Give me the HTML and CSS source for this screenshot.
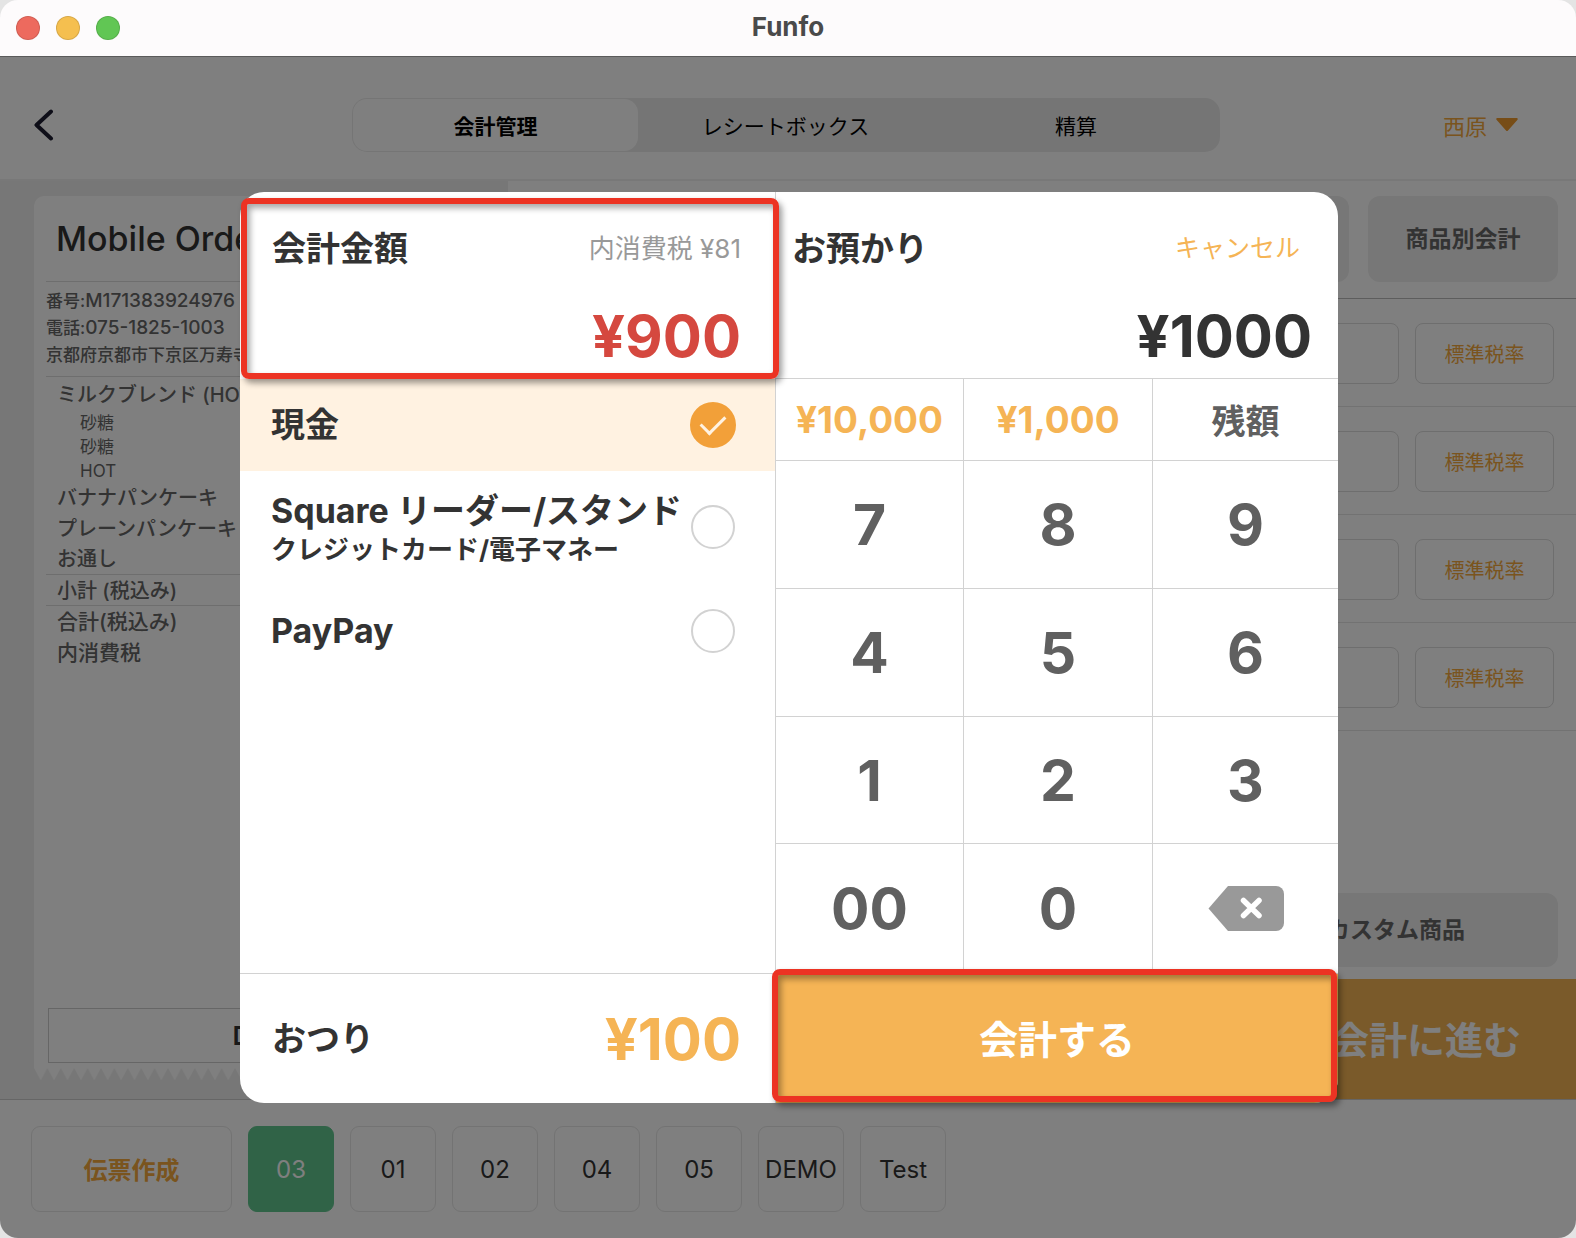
FILE: index.html
```html
<!DOCTYPE html>
<html lang="ja">
<head>
<meta charset="utf-8">
<meta name="viewport" content="width=device-width, initial-scale=1">
<title>Funfo</title>
<link rel="stylesheet" href="styles.css">
</head>
<body>
<div class="window">
  <div class="titlebar">
    <div class="lights">
      <span class="light light-close"></span>
      <span class="light light-min"></span>
      <span class="light light-max"></span>
    </div>
    <h1 class="window-title">Funfo</h1>
  </div>

  <div class="app">
    <header class="topbar">
      <button class="back" type="button" aria-label="戻る">
        <svg width="20" height="32" viewBox="0 0 20 32" fill="none" stroke="#1c1c30" stroke-width="4" stroke-linecap="round" stroke-linejoin="round"><path d="M17 2.500 2.500 16 17 29.500"/></svg>
      </button>
      <nav class="tabs">
        <button class="tab tab-active" type="button">会計管理</button>
        <button class="tab" type="button">レシートボックス</button>
        <button class="tab" type="button">精算</button>
      </nav>
      <button class="user" type="button">西原
        <svg width="22" height="14" viewBox="0 0 22 14"><path d="M1.500 0h19c1.200 0 1.700 1.200.8 2L12 12.500c-.6.700-1.400.7-2 0L.7 2C-.2 1.200.3 0 1.500 0z" fill="#ef9a2e"/></svg>
      </button>
    </header>

    <main class="content">
      <section class="receipt-pane">
        <div class="receipt">
          <h2 class="shop">Mobile Order</h2>
          <div class="shop-info">
            <p>番号:<span class="code">M171383924976</span></p>
            <p>電話:<span class="code">075-1825-1003</span></p>
            <p>京都府京都市下京区万寿寺町</p>
          </div>
          <ul class="items">
            <li>ミルクブレンド (HOT)
              <ul class="options">
                <li>砂糖</li>
                <li>砂糖</li>
                <li>HOT</li>
              </ul>
            </li>
            <li>バナナパンケーキ</li>
            <li>プレーンパンケーキ</li>
            <li>お通し</li>
          </ul>
          <p class="subtotal">小計 (税込み)</p>
          <p class="sum">合計(税込み)</p>
          <p class="sum">内消費税</p>
          <button class="receipt-button" type="button">DM</button>
        </div>
        <svg class="zigzag" width="100%" height="13" aria-hidden="true">
          <defs><pattern id="teeth" width="13.400" height="13" patternUnits="userSpaceOnUse"><path d="M0 0h13.400L6.700 12.500z" fill="#fff"/></pattern></defs>
          <rect width="100%" height="13" fill="url(#teeth)"/>
        </svg>
      </section>

      <section class="order-pane">
        <div class="actions">
          <button class="soft-button" type="button" aria-label="割引"></button>
          <button class="soft-button" type="button">商品別会計</button>
        </div>
        <ul class="lines">
          <li><input class="qty" type="text" aria-label="数量"><button class="tax" type="button">標準税率</button></li>
          <li><input class="qty" type="text" aria-label="数量"><button class="tax" type="button">標準税率</button></li>
          <li><input class="qty" type="text" aria-label="数量"><button class="tax" type="button">標準税率</button></li>
          <li><input class="qty" type="text" aria-label="数量"><button class="tax" type="button">標準税率</button></li>
        </ul>
        <button class="soft-button custom" type="button">カスタム商品</button>
        <button class="proceed" type="button">会計に進む</button>
      </section>
    </main>

    <footer class="slips">
      <button class="slip slip-new" type="button">伝票作成</button>
      <button class="slip slip-active" type="button">03</button>
      <button class="slip" type="button">01</button>
      <button class="slip" type="button">02</button>
      <button class="slip" type="button">04</button>
      <button class="slip" type="button">05</button>
      <button class="slip" type="button">DEMO</button>
      <button class="slip" type="button">Test</button>
    </footer>

    <div class="overlay">
      <div class="dialog" role="dialog" aria-label="会計">
        <section class="pay-side">
          <div class="due marked">
            <div class="head-row">
              <h2 class="heading">会計金額</h2>
              <span class="tax-note">内消費税 ¥81</span>
            </div>
            <p class="amount amount-due">¥900</p>
          </div>
          <div class="methods">
            <label class="method method-on">
              <span class="method-name">現金</span>
              <input type="radio" name="method" checked>
            </label>
            <label class="method method-tall">
              <span class="method-name">Square リーダー/スタンド<small>クレジットカード/電子マネー</small></span>
              <input type="radio" name="method">
            </label>
            <label class="method">
              <span class="method-name">PayPay</span>
              <input type="radio" name="method">
            </label>
          </div>
          <div class="change">
            <span class="heading">おつり</span>
            <span class="amount amount-change">¥100</span>
          </div>
        </section>

        <section class="key-side">
          <div class="received">
            <div class="head-row">
              <h2 class="heading">お預かり</h2>
              <button class="cancel" type="button">キャンセル</button>
            </div>
            <p class="amount">¥1000</p>
          </div>
          <div class="keypad">
            <button class="key quick" type="button">¥10,000</button>
            <button class="key quick" type="button">¥1,000</button>
            <button class="key rest" type="button">残額</button>
            <button class="key" type="button">7</button>
            <button class="key" type="button">8</button>
            <button class="key" type="button">9</button>
            <button class="key" type="button">4</button>
            <button class="key" type="button">5</button>
            <button class="key" type="button">6</button>
            <button class="key" type="button">1</button>
            <button class="key" type="button">2</button>
            <button class="key" type="button">3</button>
            <button class="key" type="button">00</button>
            <button class="key" type="button">0</button>
            <button class="key" type="button" aria-label="削除">
              <svg width="76" height="45" viewBox="0 0 76 45"><path d="M20 0H68a8 8 0 0 1 8 8V37a8 8 0 0 1-8 8H20L0.500 22.500z" fill="#999"/><path d="M35.500 14.500 51 29.500M51 14.500 35.500 29.500" stroke="#fff" stroke-width="5.500" stroke-linecap="round"/></svg>
            </button>
          </div>
          <div class="pay-box marked">
            <button class="pay" type="button">会計する</button>
          </div>
        </section>
      </div>
    </div>
  </div>
</div>
</body>
</html>
```

FILE: styles.css
```css
* {
  box-sizing: border-box;
}

body {
  margin: 0;
  background: #e4e4e4;
  font-family: Inter, "Noto Sans CJK JP", sans-serif;
  color: #333;
}

h1, h2, p, ul {
  margin: 0;
  padding: 0;
  list-style: none;
}

button {
  margin: 0;
  padding: 0;
  border: 0;
  background: none;
  color: inherit;
  font: inherit;
  white-space: nowrap;
}

/* Window frame */
.window {
  display: flex;
  flex-direction: column;
  min-height: 100vh;
  border-radius: 18px;
  overflow: hidden;
}

.titlebar {
  display: grid;
  grid-template-columns: 1fr auto 1fr;
  align-items: center;
  height: 57px;
  padding: 0 16px;
  background: #fdfbfc;
  border-bottom: 1px solid #5a5a5a;
}

.lights {
  display: flex;
  gap: 16px;
}

.light {
  width: 24px;
  height: 24px;
  border: 1px solid rgba(0, 0, 0, .12);
  border-radius: 50%;
}

.light-close { background: #ed6a5e; }
.light-min { background: #f5bf4f; }
.light-max { background: #61c654; }

.window-title {
  padding-bottom: 2px;
  color: #4a4a4a;
  font-size: 26px;
  line-height: 52px;
  font-weight: 700;
}

.app {
  position: relative;
  display: flex;
  flex: 1;
  flex-direction: column;
  background: #fff;
}

/* Top bar */
.topbar {
  display: grid;
  grid-template-columns: 318px 1fr 298px;
  align-items: center;
  height: 124px;
  padding: 14px 58px 0 34px;
  border-bottom: 2px solid #f0f0f0;
}

.back {
  justify-self: start;
  height: 32px;
}

.back svg,
.user svg,
.key svg {
  display: block;
}

.tabs {
  display: grid;
  grid-template-columns: 285fr 295fr 286fr;
  height: 54px;
  padding: 1px;
  border-radius: 15px;
  background: #ebebeb;
}

.tab {
  border-radius: 14px;
  color: #000;
  font-size: 21px;
}

.tab-active {
  background: #fff;
  font-weight: 700;
}

.user {
  display: flex;
  align-items: center;
  justify-self: end;
  gap: 9px;
  color: #f5a93d;
  font-size: 22px;
}

/* Main area */
.content {
  display: flex;
  flex: 1;
}

.receipt-pane {
  display: flex;
  flex: 0 0 508px;
  flex-direction: column;
  padding: 15px 34px 18px;
  background: #eee;
}

.receipt {
  display: flex;
  flex: 1;
  flex-direction: column;
  padding: 0 14px 5px 12px;
  border-radius: 10px 10px 0 0;
  background: #fff;
  white-space: nowrap;
  overflow: hidden;
}

.zigzag {
  display: block;
}

.shop {
  padding: 1px 10px 0;
  border-bottom: 1px solid #ddd;
  font-size: 34px;
  font-weight: 500;
  line-height: 84px;
}

.shop-info {
  padding: 6px 0 7px;
  border-bottom: 1px solid #ddd;
  color: #666;
  font-size: 17px;
  font-weight: 500;
  line-height: 27px;
}

.code {
  font-size: 19px;
  line-height: 1;
}

.items {
  padding: 3px 11px 0;
  border-bottom: 1px solid #ddd;
  color: #666;
  font-size: 20px;
  font-weight: 500;
  line-height: 31px;
}

.items > li:last-child {
  line-height: 29px;
}

.options {
  padding: 0 0 0 23px;
  font-size: 17px;
  font-weight: 400;
  line-height: 24px;
}

.subtotal {
  padding: 2px 11px 0;
  border-bottom: 1px solid #ddd;
  color: #666;
  font-size: 20px;
  font-weight: 500;
  line-height: 28px;
}

.sum {
  padding: 0 11px;
  color: #666;
  font-size: 21px;
  font-weight: 500;
  line-height: 31px;
}

.receipt-button {
  height: 55px;
  margin: auto 0 0 2px;
  border: 1px solid #ccc;
  font-size: 26px;
  font-weight: 600;
}

.order-pane {
  display: flex;
  flex: 1;
  flex-direction: column;
}

.actions {
  display: flex;
  justify-content: flex-end;
  gap: 19px;
  padding: 15px 18px 16px;
  border-bottom: 1px solid #bbb;
}

.soft-button {
  width: 190px;
  height: 86px;
  padding-bottom: 4px;
  border-radius: 12px;
  background: #eee;
  color: #666;
  font-size: 23px;
  font-weight: 700;
}

.lines li {
  display: flex;
  justify-content: flex-end;
  gap: 16px;
  padding: 24px 22px 22px;
  border-bottom: 1px solid #e4e4e4;
}

.qty,
.tax {
  width: 139px;
  height: 61px;
  border: 1px solid #dcdcdc;
  border-radius: 8px;
  background: none;
}

.tax {
  color: #f5a93d;
  font-size: 20px;
}

.custom {
  align-self: flex-end;
  width: 324px;
  height: 74px;
  margin: auto 18px 12px 0;
}

.proceed {
  align-self: flex-end;
  width: 300px;
  height: 120px;
  padding-bottom: 4px;
  background: #f5b455;
  color: #fff;
  font-size: 38px;
  font-weight: 700;
}

/* Slip list */
.slips {
  display: flex;
  gap: 16px;
  padding: 26px 31px;
  border-top: 1px solid #ccc;
}

.slip {
  width: 86px;
  height: 86px;
  border: 1px solid #e6e6e6;
  border-radius: 9px;
  font-size: 24px;
}

.slip-new {
  width: 201px;
  padding-bottom: 2px;
  color: #f5a93d;
  font-weight: 700;
}

.slip-active {
  border-color: #60c68e;
  background: #60c68e;
  color: #fff;
}

/* Checkout dialog */
.overlay {
  position: absolute;
  inset: 0;
  display: flex;
  padding: 135px 238px 135px 240px;
  background: rgba(0, 0, 0, .5);
}

.dialog {
  display: grid;
  flex: 1;
  grid-template-columns: 536fr 562fr;
  border-radius: 24px;
  background: #fff;
}

.pay-side,
.key-side {
  display: flex;
  flex-direction: column;
  min-width: 0;
}

.pay-side {
  border-right: 1px solid #d2d2d2;
}

/* Red highlight frame drawn over a section */
.marked {
  position: relative;
}

.marked::after {
  content: "";
  position: absolute;
  z-index: 1;
  inset: 6px -4px 0 1px;
  border: 6px solid #ec3323;
  border-radius: 8px;
  box-shadow: 3px 4px 6px rgba(0, 0, 0, .4), inset 3px 4px 6px rgba(0, 0, 0, .35);
  pointer-events: none;
}

.due,
.received {
  height: 187px;
  padding: 30px 34px 0 32px;
}

.received {
  padding: 30px 26px 0 16px;
  border-bottom: 1px solid #d2d2d2;
}

.head-row {
  display: flex;
  align-items: center;
  justify-content: space-between;
  height: 48px;
}

.heading {
  font-size: 34px;
  font-weight: 700;
}

.tax-note {
  color: #999;
  font-size: 26px;
}

.cancel {
  margin-right: 12px;
  color: #f5b455;
  font-size: 25px;
}

.amount {
  font-size: 58px;
  font-weight: 700;
  line-height: 64px;
  text-align: right;
}

.head-row + .amount {
  margin-top: 34px;
}

.amount-due { color: #d5483f; }
.amount-change { color: #f5b455; }

.methods {
  flex: 1;
}

.method {
  display: flex;
  align-items: center;
  justify-content: space-between;
  height: 96px;
  padding: 0 40px 0 31px;
}

.method-on {
  height: 92px;
  padding-right: 39px;
  background: #fff2e1;
}

.method-tall {
  height: 112px;
}

.method-name {
  font-size: 34px;
  font-weight: 700;
  line-height: 42px;
  white-space: nowrap;
}

.method-tall .method-name {
  padding-top: 4px;
}

.method-name small {
  display: block;
  font-size: 26px;
  line-height: 36px;
}

.method input {
  display: grid;
  flex: none;
  place-items: center;
  width: 44px;
  height: 44px;
  margin: 0;
  border: 2px solid #d2d2d2;
  border-radius: 50%;
  appearance: none;
}

.method input:checked {
  width: 46px;
  height: 46px;
  border-color: #f2a039;
  background: #f2a039;
}

.method input:checked::after {
  content: "";
  width: 21px;
  height: 11px;
  margin-bottom: 6px;
  border: solid #fff2e1;
  border-width: 0 0 3px 3px;
  transform: rotate(-45deg);
}

.change {
  display: flex;
  align-items: center;
  justify-content: space-between;
  height: 130px;
  padding: 0 34px 0 32px;
  border-top: 1px solid #d2d2d2;
}

.change .heading {
  padding-bottom: 4px;
}

.keypad {
  display: grid;
  flex: 1;
  grid-template-columns: 188fr 189fr 185fr;
  grid-template-rows: 82px 128fr 128fr 127fr 130fr;
}

.key {
  display: flex;
  align-items: center;
  justify-content: center;
  border-right: 1px solid #d2d2d2;
  border-bottom: 1px solid #d2d2d2;
  color: #606060;
  font-size: 57px;
  font-weight: 700;
}

.key:nth-child(3n) {
  border-right: 0;
}

.quick {
  color: #f5b455;
  font-size: 37px;
}

.rest {
  font-size: 34px;
}

.pay-box {
  height: 129px;
}

.pay-box::after {
  inset: -5px 1px 1px -4px;
}

.pay {
  width: 100%;
  height: 100%;
  padding-bottom: 4px;
  border-radius: 0 0 24px 0;
  background: #f5b455;
  color: #fff;
  font-size: 39px;
  font-weight: 700;
}
```
